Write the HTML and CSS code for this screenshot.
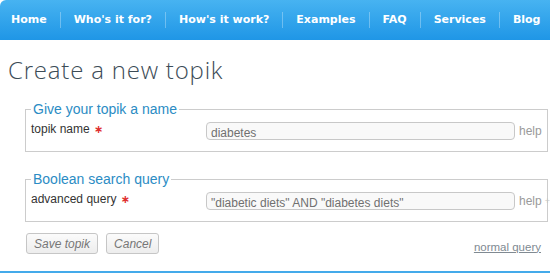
FILE: index.html
```html
<!DOCTYPE html>
<html lang="en">
<head>
<meta charset="utf-8">
<title>Create a new topik</title>
<link rel="stylesheet" href="styles.css">
</head>
<body>
<nav class="topnav">
  <ul class="menu">
    <li class="menu-item">Home</li>
    <li class="menu-item">Who's it for?</li>
    <li class="menu-item">How's it work?</li>
    <li class="menu-item">Examples</li>
    <li class="menu-item">FAQ</li>
    <li class="menu-item">Services</li>
    <li class="menu-item">Blog</li>
  </ul>
</nav>
<main class="page">
  <h1 class="title">Create a new topik</h1>
  <form class="topik-form">
    <fieldset class="group">
      <legend class="group-title">Give your topik a name</legend>
      <div class="field">
        <label class="field-label">topik name <span class="req">&#x2217;</span></label>
        <input class="field-input" type="text" value="diabetes">
        <a class="help">help</a>
      </div>
    </fieldset>
    <fieldset class="group group-second">
      <legend class="group-title">Boolean search query</legend>
      <div class="field">
        <label class="field-label">advanced query <span class="req">&#x2217;</span></label>
        <input class="field-input" type="text" value="&quot;diabetic diets&quot; AND &quot;diabetes diets&quot;">
        <a class="help">help</a>
        <span class="more">+</span>
      </div>
    </fieldset>
    <div class="actions">
      <button class="btn" type="button">Save topik</button>
      <button class="btn" type="button">Cancel</button>
      <a class="switch">normal query</a>
    </div>
  </form>
</main>
<div class="footer-line"></div>
</body>
</html>
```
FILE: styles.css
```css
html, body {
  margin: 0;
  padding: 0;
  background: #ffffff;
  overflow: hidden;
}

body {
  font-family: "Liberation Sans", Arial, sans-serif;
  font-size: 12px;
  color: #333333;
}

.topnav {
  height: 40px;
  background: linear-gradient(#47b3f1, #1f96e6);
  border-top-left-radius: 6px;
  display: flex;
  align-items: center;
}

.menu {
  list-style: none;
  margin: 0;
  padding: 0;
  display: flex;
  align-items: center;
  white-space: nowrap;
}

.menu-item {
  font-family: "DejaVu Sans", Verdana, sans-serif;
  font-weight: bold;
  font-size: 11px;
  line-height: 16px;
  color: #ffffff;
  padding: 0 13px;
  border-left: 1px solid rgba(255, 255, 255, 0.3);
}

.menu-item:first-child {
  border-left: none;
  padding-left: 11px;
}

.page {
  padding: 0 0 0 8px;
}

.title {
  margin: 16px 0 0;
  font-family: "Open Sans", sans-serif;
  font-weight: 300;
  font-size: 24px;
  line-height: 28px;
  letter-spacing: 0.8px;
  color: #3c4c57;
}

.topik-form {
  margin: 16px 2px 0 17px;
}

.group {
  margin: 0;
  padding: 4px 6px 11px 5px;
  border: 1px solid #cccccc;
  min-width: 0;
}

.group-second {
  margin-top: 18px;
}

.group-title {
  padding: 0 2px;
  font-size: 14px;
  line-height: 18px;
  color: #2b8cc4;
}

.field {
  display: flex;
  align-items: flex-start;
}

.field-label {
  flex: none;
  width: 175px;
  line-height: 14px;
  color: #333333;
}

.req {
  font-family: "DejaVu Sans", sans-serif;
  color: #e03030;
  font-size: 11px;
  font-weight: bold;
  margin-left: 1px;
}

.field-input {
  flex: none;
  box-sizing: border-box;
  width: 309px;
  height: 18px;
  margin: 0;
  padding: 3px 4px 0;
  border: 1px solid #c8c8c8;
  border-radius: 4px;
  background: #f9f9f9;
  font-family: "Liberation Sans", Arial, sans-serif;
  font-size: 12px;
  color: #707070;
  outline: none;
}

.help {
  flex: none;
  margin-left: 4px;
  line-height: 18px;
  color: #9a9a9a;
}

.more {
  flex: none;
  margin-left: 3px;
  line-height: 18px;
  font-size: 9px;
  color: #c4c4c4;
}

.actions {
  display: flex;
  align-items: center;
  gap: 8px;
  margin-top: 11px;
  padding: 0 7px 0 1px;
}

.btn {
  box-sizing: border-box;
  height: 21px;
  margin: 0;
  padding: 0 7px;
  border: 1px solid #c6c6c6;
  border-radius: 3px;
  background: linear-gradient(#fbfbfb, #ededed);
  font-family: "Liberation Sans", Arial, sans-serif;
  font-style: italic;
  font-size: 12px;
  color: #777777;
}

.switch {
  margin-left: auto;
  margin-top: 6px;
  font-size: 11.5px;
  color: #808a92;
  text-decoration: underline;
}

.footer-line {
  margin-top: 17px;
  border-top: 2px solid #44aaea;
}
```
